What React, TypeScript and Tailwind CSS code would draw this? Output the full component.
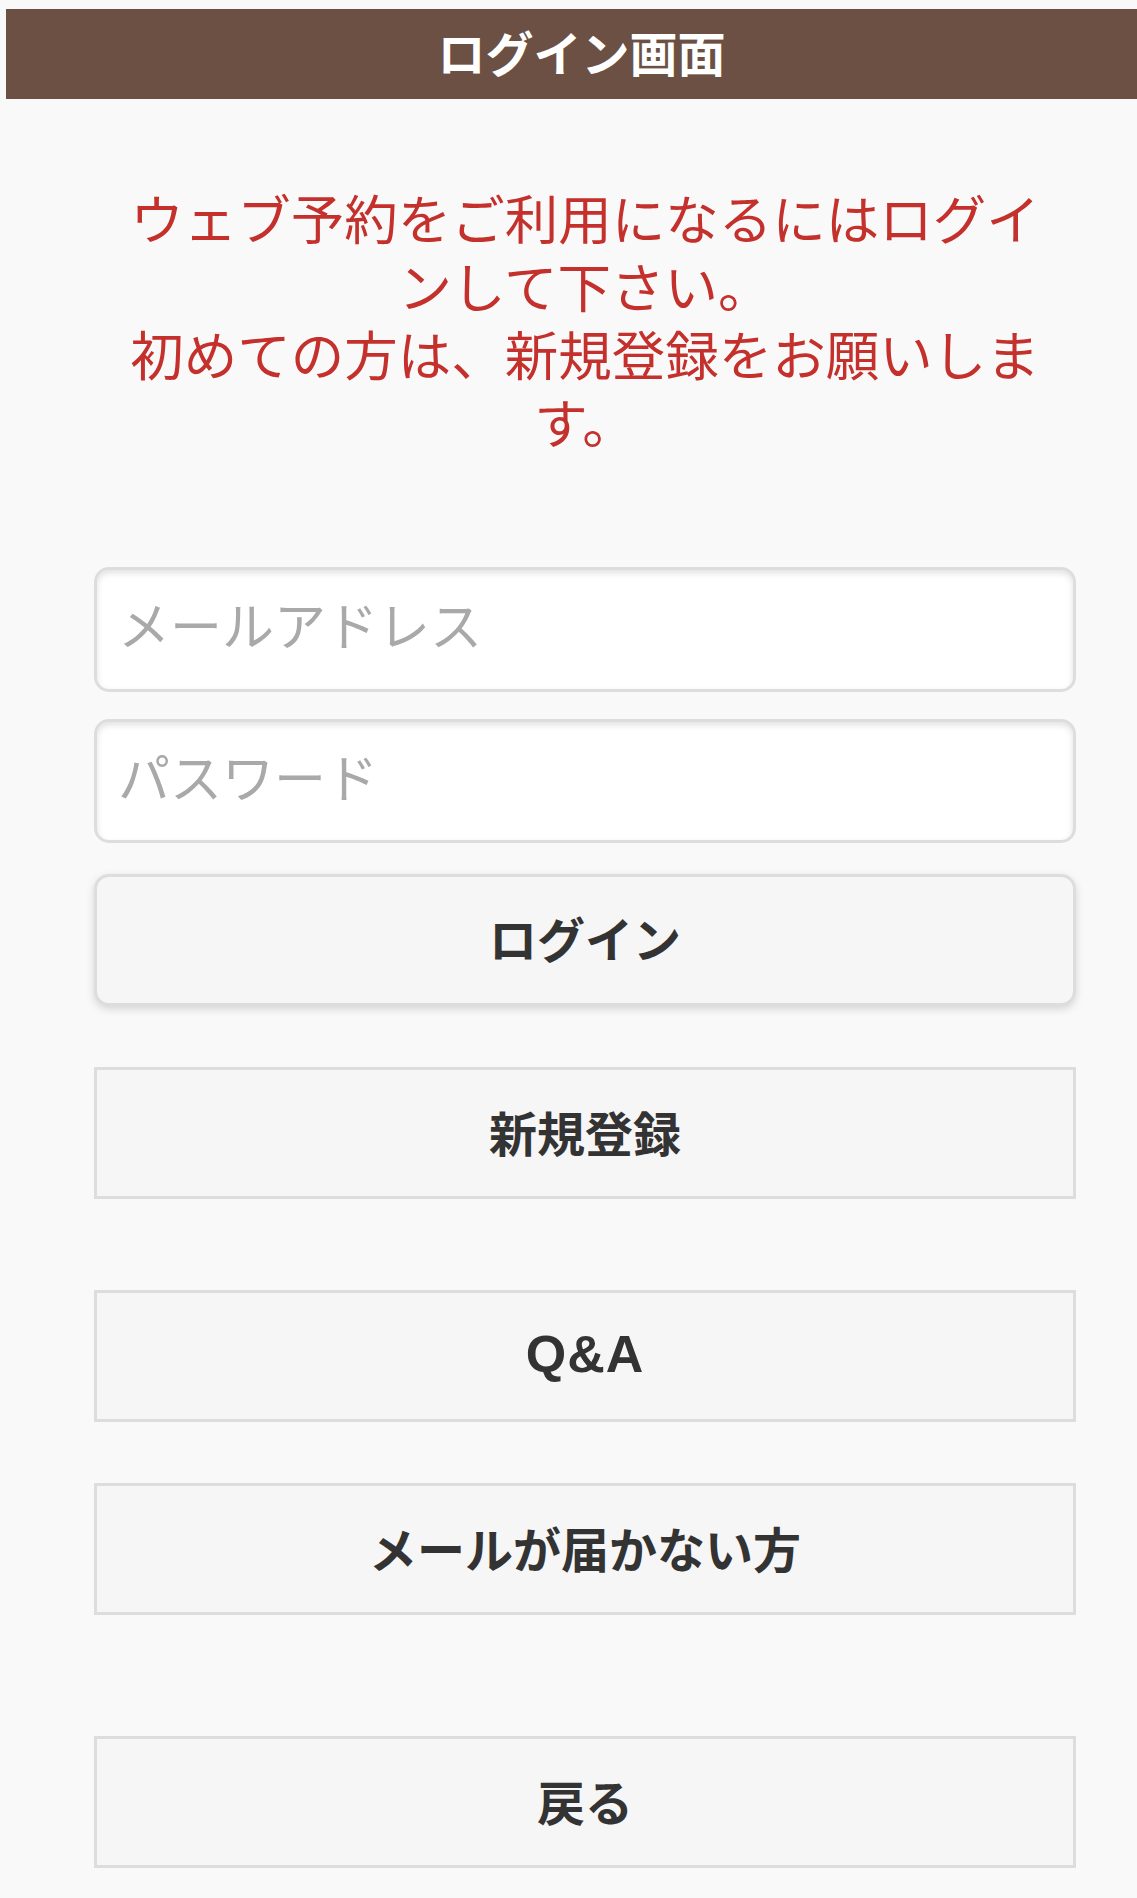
import React from "react";

const font = { fontFamily: '"Noto Sans CJK JP", "Noto Sans", sans-serif' };

function Btn({ label, rounded, latin }: { label: string; rounded?: boolean; latin?: boolean }) {
  return (
    <button
      type="button"
      className={
        rounded
          ? "flex h-[132px] w-full items-center justify-center rounded-[15px] border-[3px] border-[#dddddd] bg-[#f6f6f6] pb-[7px] text-[48px] font-bold text-[#333333] shadow-[0_3px_9px_rgba(0,0,0,0.15)]"
          : "flex h-[132px] w-full items-center justify-center border-[3px] border-[#dddddd] bg-[#f6f6f6] pb-[5px] text-[48px] font-bold text-[#333333]"
      }
    >
      {latin ? (
        <span className="text-[52px] tracking-[1px]" style={{ fontFamily: '"Liberation Sans", Arial, sans-serif' }}>
          {label}
        </span>
      ) : (
        label
      )}
    </button>
  );
}

export default function App() {
  return (
    <div className="min-h-[1898px] w-[1137px] bg-[#f9f9f9] pt-[9px]" style={font}>
      <header className="ml-[6px] flex h-[90px] items-center justify-center bg-[#6b5043] pb-[7px] pl-[20px]">
        <h1 className="text-[48px] font-bold leading-none text-white">ログイン画面</h1>
      </header>

      <div className="ml-[94px] w-[982px]">
        <p className="mt-[84px] px-[18px] text-center text-[53.5px] leading-[68px] text-[#c4302b]">
          ウェブ予約をご利用になるにはログインして下さい。
          <br />
          初めての方は、新規登録をお願いします。
        </p>

        <div className="mt-[112px] flex flex-col">
          <input
            type="email"
            placeholder="メールアドレス"
            className="h-[125px] w-full rounded-[15px] border-[3px] border-[#dddddd] bg-white px-[21px] pb-[12px] text-[52px] text-[#333] shadow-[inset_0_3px_6px_rgba(0,0,0,0.12)] outline-none placeholder:text-[#a9a9a9]"
          />
          <input
            type="password"
            placeholder="パスワード"
            className="mt-[27px] h-[124px] w-full rounded-[15px] border-[3px] border-[#dddddd] bg-white px-[21px] pb-[12px] text-[52px] text-[#333] shadow-[inset_0_3px_6px_rgba(0,0,0,0.12)] outline-none placeholder:text-[#a9a9a9]"
          />
          <div className="mt-[31px]">
            <Btn label="ログイン" rounded />
          </div>
          <div className="mt-[61px]">
            <Btn label="新規登録" />
          </div>
          <div className="mt-[91px]">
            <Btn label="Q&A" latin />
          </div>
          <div className="mt-[61px]">
            <Btn label="メールが届かない方" />
          </div>
          <div className="mt-[121px]">
            <Btn label="戻る" />
          </div>
        </div>
      </div>
    </div>
  );
}
